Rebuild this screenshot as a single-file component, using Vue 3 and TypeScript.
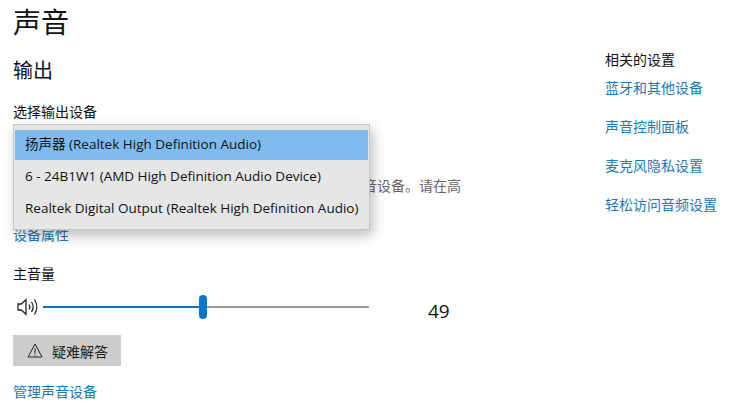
<script setup lang="ts">
import { ref } from "vue";

const volume = ref(49);

const devices = [
  { name: "扬声器 (Realtek High Definition Audio)", active: true },
  { name: "6 - 24B1W1 (AMD High Definition Audio Device)", active: false },
  { name: "Realtek Digital Output (Realtek High Definition Audio)", active: false },
];

const relatedLinks = ["蓝牙和其他设备", "声音控制面板", "麦克风隐私设置", "轻松访问音频设置"];
</script>

<template>
  <div class="page">
    <main class="main">
      <h1 class="title">声音</h1>
      <h2 class="subtitle">输出</h2>
      <div class="label">选择输出设备</div>

      <section class="device">
        <ul class="dropdown">
          <li v-for="d in devices" :key="d.name" class="option" :class="{ active: d.active }">
            {{ d.name }}
          </li>
        </ul>
        <p class="hint">
          某些应用可能被设置为使用与此处所选择的设备不同的声音设备。请在高级声音选项中自定义应用音量和设备。
        </p>
        <a class="link props">设备属性</a>
      </section>

      <div class="label volume-label">主音量</div>
      <div class="volume">
        <svg class="speaker" width="22" height="20" viewBox="0 0 22 20" fill="none" stroke="#222" stroke-width="1.3">
          <path d="M1 7h3.2L9 2.8v14.4L4.200 13H1z" />
          <path d="M12 7.500c1 1.500 1 3.500 0 5" />
          <path d="M14.500 5c2 3 2 7 0 10" />
          <path d="M17.500 2.500c3 4.500 3 10.500 0 15" />
        </svg>
        <div class="track">
          <div class="fill" :style="{ width: volume + '%' }"></div>
          <div class="thumb" :style="{ left: volume + '%' }"></div>
        </div>
        <span class="value">{{ volume }}</span>
      </div>

      <button class="trouble">
        <svg width="16" height="15" viewBox="0 0 16 15" fill="none" stroke="#222" stroke-width="1">
          <path d="M8 1 15 14H1z" />
          <path d="M8 5.500v5M8 11.500v1.200" />
        </svg>
        <span>疑难解答</span>
      </button>

      <a class="link manage">管理声音设备</a>
    </main>

    <aside class="side">
      <div class="side-title">相关的设置</div>
      <a v-for="item in relatedLinks" :key="item" class="link side-link">{{ item }}</a>
    </aside>
  </div>
</template>

<style>
html,
body {
  background: #fff;
  overflow: hidden;
}
</style>

<style scoped>
.page {
  display: flex;
  width: 739px;
  height: 411px;
  overflow: hidden;
  font-family: "Open Sans", "Noto Sans CJK SC", sans-serif;
  color: #111;
}

.main {
  width: 592px;
  padding-left: 13px;
  box-sizing: border-box;
  flex-shrink: 0;
}

.title {
  margin: 5px 0 0;
  font-size: 28px;
  line-height: 34px;
  font-weight: 400;
}

.subtitle {
  margin: 20px 0 0;
  font-size: 20px;
  line-height: 24px;
  font-weight: 400;
}

.label {
  margin-top: 19px;
  font-size: 14px;
  line-height: 20px;
}

.device {
  position: relative;
  margin-top: 2px;
  padding-top: 52px;
}

.dropdown {
  position: absolute;
  top: 0;
  left: 0;
  width: 357px;
  height: 106px;
  box-sizing: border-box;
  margin: 0;
  padding: 5px 1px 0;
  list-style: none;
  background: #e6e6e6;
  border: 1px solid #c6c6c6;
  box-shadow: 3px 6px 12px rgba(0, 0, 0, 0.25);
  z-index: 2;
}

.option {
  height: 32px;
  padding-left: 10px;
  font-size: 13.500px;
  line-height: 32px;
  white-space: nowrap;
}

.option.active {
  height: 30px;
  line-height: 29px;
  background: #7fbbef;
}

.hint {
  width: 450px;
  margin: 0;
  font-size: 14px;
  line-height: 20px;
  color: #666;
}

.link {
  display: block;
  font-size: 14px;
  line-height: 20px;
  color: #1a79b8;
  cursor: pointer;
}

.props {
  margin-top: 9px;
}

.volume-label {
  margin-top: 19px;
}

.volume {
  display: flex;
  align-items: center;
  height: 24px;
  margin-top: 11px;
}

.speaker {
  margin-left: 4px;
  margin-right: 4px;
  flex-shrink: 0;
}

.track {
  position: relative;
  width: 326px;
  height: 2px;
  background: #999;
}

.fill {
  height: 100%;
  background: #0e6fbd;
}

.thumb {
  position: absolute;
  top: -11px;
  width: 8px;
  height: 24px;
  margin-left: -4px;
  border-radius: 4px;
  background: #0b74d1;
}

.value {
  margin: 7px 0 0 59px;
  font-size: 19px;
  line-height: 24px;
}

.trouble {
  display: flex;
  align-items: center;
  gap: 9px;
  width: 108px;
  height: 31px;
  margin-top: 16px;
  padding: 0 0 0 14px;
  border: none;
  background: #ccc;
  font-family: inherit;
  font-size: 14px;
  color: #222;
}

.manage {
  margin-top: 16px;
}

.side {
  display: flex;
  flex-direction: column;
  gap: 19px;
  padding: 50px 0 0 13px;
}

.side-title {
  margin-bottom: -11px;
  font-size: 14px;
  line-height: 20px;
}

.side-link {
  font-size: 14px;
}
</style>
